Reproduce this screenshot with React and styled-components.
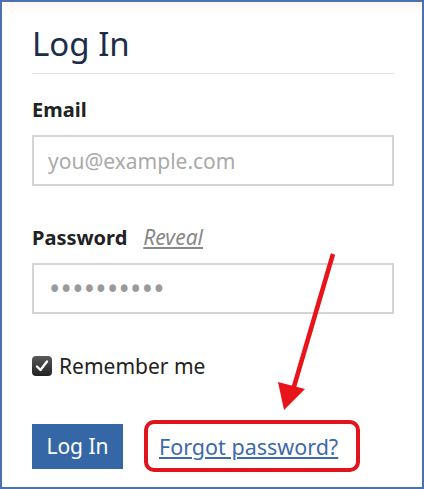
import styled, { createGlobalStyle } from 'styled-components';

const GlobalStyle = createGlobalStyle`
  html, body {
    margin: 0;
    padding: 0;
    background: #ffffff;
  }
  body {
    font-family: "Noto Sans", "DejaVu Sans", sans-serif;
  }
`;

const Frame = styled.div`
  position: relative;
  box-sizing: border-box;
  width: 424px;
  height: 489px;
  border: 2px solid #4a72b0;
  background: linear-gradient(#fdf7f4 0, #ffffff 14px);
  padding: 20px 28px 0 30px;
  overflow: hidden;
`;

const Title = styled.h1`
  margin: 0;
  font-size: 33px;
  font-weight: 400;
  line-height: 44px;
  color: #1c2d4a;
  padding-bottom: 7px;
  border-bottom: 1px solid #dde6ec;
`;

const Field = styled.div`
  margin-top: ${p => p.$top}px;
`;

const LabelRow = styled.div`
  display: flex;
  align-items: baseline;
  gap: 16px;
  height: 30px;
`;

const Label = styled.label`
  font-size: 20px;
  font-weight: 700;
  color: #222;
`;

const Reveal = styled.a`
  font-size: 21px;
  font-style: italic;
  color: #888;
  text-decoration: underline;
`;

const Input = styled.div`
  box-sizing: border-box;
  margin-top: ${p => p.$top}px;
  height: 51px;
  border: 2px solid #d4d4d4;
  display: flex;
  align-items: center;
  padding-left: ${p => (p.$dots ? '15px' : '14px')};
  font-size: ${p => (p.$dots ? '30px' : '21px')};
  color: ${p => (p.$dots ? '#9a9a9a' : '#aaaaaa')};
  letter-spacing: ${p => (p.$dots ? '0.3px' : '0')};
`;

const Check = styled.label`
  display: flex;
  align-items: center;
  gap: 7px;
  height: 28px;
  margin-top: 38px;
  font-size: 21px;
  color: #222;
`;

const Box = styled.span`
  width: 20px;
  height: 20px;
  border-radius: 4px;
  background: linear-gradient(#5a5a5a, #222);
  display: flex;
  align-items: center;
  justify-content: center;
`;

const Actions = styled.div`
  display: flex;
  align-items: center;
  gap: 21px;
  margin-top: 40px;
`;

const Button = styled.button`
  width: 91px;
  height: 45px;
  border: none;
  background: #3566a6;
  color: #fff;
  font-family: inherit;
  font-size: 21px;
  padding: 0;
`;

const Highlight = styled.div`
  box-sizing: border-box;
  height: 52px;
  padding: 0 18px 0 11px;
  border: 4px solid #e0141c;
  border-radius: 10px;
  display: flex;
  align-items: center;
`;

const ForgotLink = styled.a`
  font-size: 21.5px;
  color: #3d6aa8;
  text-decoration: underline;
`;

const Arrow = styled.svg`
  position: absolute;
  left: 0;
  top: 0;
  pointer-events: none;
`;

export default function App() {
  return (
    <>
      <GlobalStyle />
      <Frame>
        <Title>Log In</Title>
        <Field $top={22}>
          <LabelRow>
            <Label>Email</Label>
          </LabelRow>
          <Input $top={9}>you@example.com</Input>
        </Field>
        <Field $top={37}>
          <LabelRow>
            <Label>Password</Label>
            <Reveal>Reveal</Reveal>
          </LabelRow>
          <Input $top={10} $dots>
            ••••••••••
          </Input>
        </Field>
        <Check>
          <Box>
            <svg width="16" height="16" viewBox="0 0 16 16">
              <path d="M3 8.5 L6.5 12 L13 3.5" fill="none" stroke="#fff" strokeWidth="2.4" strokeLinecap="round" strokeLinejoin="round" />
            </svg>
          </Box>
          Remember me
        </Check>
        <Actions>
          <Button>Log In</Button>
          <Highlight>
            <ForgotLink>Forgot password?</ForgotLink>
          </Highlight>
        </Actions>
        <Arrow width="424" height="489" viewBox="0 0 424 489">
          <line x1="331" y1="252" x2="291" y2="388" stroke="#e8141a" strokeWidth="4.5" />
          <polygon points="282,408 276,380 303,387" fill="#e8141a" />
        </Arrow>
      </Frame>
    </>
  );
}
